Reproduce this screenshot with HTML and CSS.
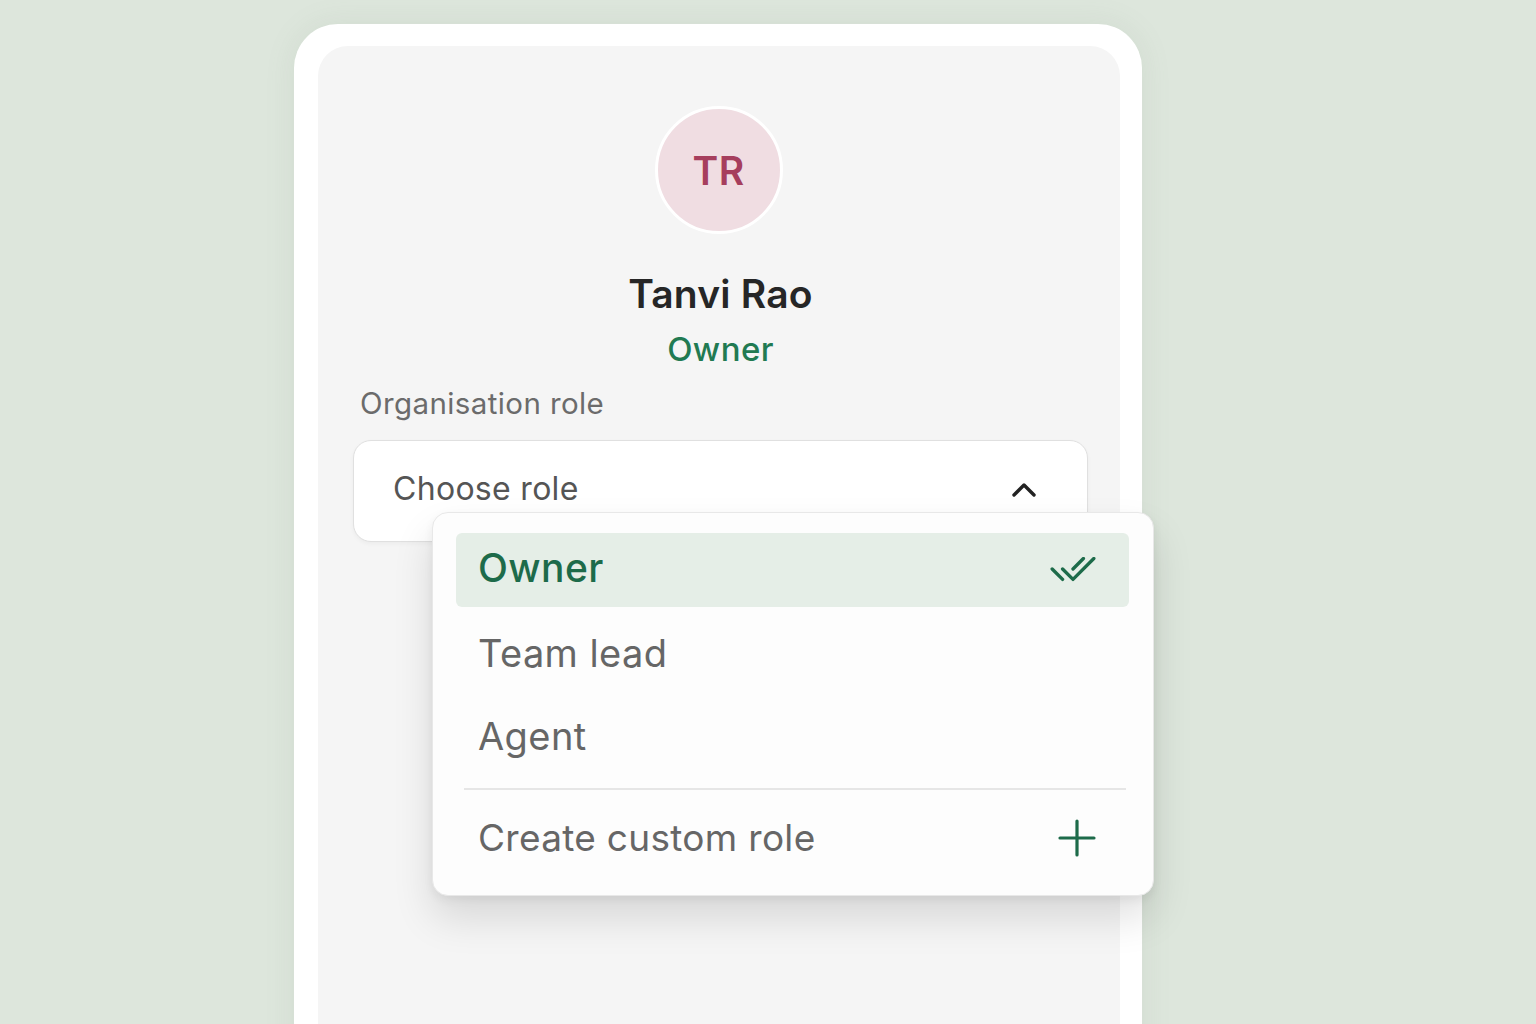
FILE: index.html
```html
<!DOCTYPE html>
<html lang="en">
<head>
<meta charset="utf-8">
<title>Member role</title>
<link rel="stylesheet" href="styles.css">
</head>
<body>
<div class="frame">
  <div class="panel">
    <div class="avatar">TR</div>
    <div class="name">Tanvi Rao</div>
    <div class="role">Owner</div>
    <div class="label">Organisation role</div>
    <div class="select-wrap">
      <div class="select">
        <span class="placeholder">Choose role</span>
        <svg class="chevron" width="26" height="16" viewBox="0 0 26 16"><path d="M3 13 L13 3 L23 13" fill="none" stroke="#222" stroke-width="3.4" stroke-linecap="round" stroke-linejoin="round"/></svg>
      </div>
      <div class="menu">
        <div class="item selected">
          <span>Owner</span>
          <svg width="50" height="26" viewBox="0 0 24 12"><path d="M7 5.5l5 5l10 -10" fill="none" stroke="#1d6b4a" stroke-width="1.6" stroke-linecap="round" stroke-linejoin="round"/><path d="M2 5.5l5 5m5 -5l5 -5" fill="none" stroke="#1d6b4a" stroke-width="1.6" stroke-linecap="round" stroke-linejoin="round"/></svg>
        </div>
        <div class="item">Team lead</div>
        <div class="item">Agent</div>
        <div class="divider"></div>
        <div class="item create">
          <span>Create custom role</span>
          <svg width="38" height="38" viewBox="0 0 38 38"><path d="M19 2 V36 M2 19 H36" fill="none" stroke="#1d6b4a" stroke-width="3.2" stroke-linecap="round"/></svg>
        </div>
      </div>
    </div>
  </div>
</div>
</body>
</html>
```
FILE: styles.css
```css
html, body {
  margin: 0;
  padding: 0;
  height: 100%;
  overflow: hidden;
}
body {
  background: #dde6dc;
  font-family: Inter, "Noto Sans", "Liberation Sans", sans-serif;
}
.frame {
  margin: 24px 0 0 294px;
  width: 848px;
  height: 1100px;
  box-sizing: border-box;
  background: #ffffff;
  border-radius: 44px;
  padding: 22px 22px 0 24px;
  box-shadow: 0 0 30px rgba(120, 140, 120, 0.12);
}
.panel {
  background: #f5f5f5;
  border-radius: 30px;
  height: 100%;
  box-sizing: border-box;
  padding: 60px 32px 0 35px;
  display: flex;
  flex-direction: column;
  align-items: center;
}
.avatar {
  width: 122px;
  height: 122px;
  border-radius: 50%;
  background: #f0dde2;
  border: 3px solid #ffffff;
  display: flex;
  align-items: center;
  justify-content: center;
  color: #a63e5d;
  font-size: 39px;
  font-weight: 600;
  letter-spacing: 0.5px;
  margin-left: -4px;
}
.name {
  margin-top: 38px;
  font-size: 39px;
  line-height: 44px;
  font-weight: 600;
  letter-spacing: 0.2px;
  color: #262626;
}
.role {
  margin-top: 15px;
  font-size: 33px;
  line-height: 36px;
  font-weight: 500;
  letter-spacing: 0.4px;
  color: #217a52;
}
.label {
  align-self: stretch;
  margin-top: 20px;
  padding-left: 7px;
  font-size: 29.5px;
  line-height: 32px;
  letter-spacing: 0.4px;
  color: #6b6b6b;
}
.select-wrap {
  align-self: stretch;
  position: relative;
  margin-top: 21px;
}
.select {
  height: 102px;
  box-sizing: border-box;
  background: #ffffff;
  border: 1.5px solid #e0e0e0;
  border-radius: 18px;
  display: flex;
  align-items: center;
  justify-content: space-between;
  padding: 0 50px 0 39px;
  box-shadow: 0 2px 4px rgba(0, 0, 0, 0.04);
}
.placeholder {
  font-size: 32px;
  letter-spacing: 0.3px;
  color: #555555;
  margin-top: -6px;
}
.chevron {
  margin-top: -2px;
}
.menu {
  position: absolute;
  top: 72px;
  left: 79px;
  width: 722px;
  height: 384px;
  box-sizing: border-box;
  background: #fdfdfd;
  border: 1px solid #e8e8e8;
  border-radius: 16px;
  padding: 20px 24px 22px 23px;
  box-shadow: 0 22px 40px rgba(0, 0, 0, 0.12), 0 4px 10px rgba(0, 0, 0, 0.06);
  display: flex;
  flex-direction: column;
}
.item {
  height: 74px;
  display: flex;
  align-items: center;
  justify-content: space-between;
  padding: 0 33px 0 22px;
  font-size: 38px;
  letter-spacing: 0.4px;
  color: #666666;
  border-radius: 6px;
  flex-shrink: 0;
}
.item + .item {
  margin-top: 9px;
}
.item.selected {
  background: #e5eee7;
  color: #1d6b4a;
  font-weight: 500;
  font-size: 39px;
  padding-right: 31px;
}
.item.selected span {
  margin-top: -6px;
}
.divider {
  height: 1.5px;
  background: #e6e6e6;
  margin: 15px 3px 0 8px;
  flex-shrink: 0;
}
.item.create {
  margin-top: 11px;
  padding-right: 33px;
  font-size: 37px;
  letter-spacing: 0.3px;
}
```
